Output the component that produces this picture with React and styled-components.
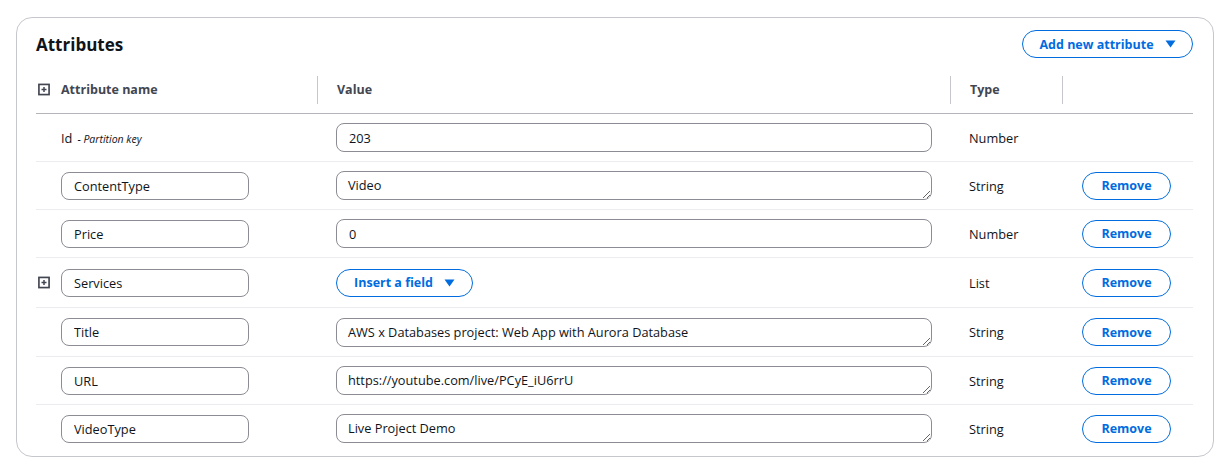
import React from "react";
import styled, { createGlobalStyle } from "styled-components";

const GlobalStyle = createGlobalStyle`
	body {
		margin: 0;
		background: #ffffff;
		font-family: "Open Sans", "Noto Sans", sans-serif;
		color: #0f141a;
	}
	* {
		box-sizing: border-box;
	}
`;

const Page = styled.div`
	padding: 17px 16px 0 16px;
`;

const Panel = styled.div`
	border: 1px solid #c6c6cd;
	border-radius: 16px;
	padding: 12px 20px 3px 19px;
	width: 1198px;
`;

const TopBar = styled.div`
	display: flex;
	justify-content: space-between;
	align-items: center;
	height: 28px;
`;

const Title = styled.h2`
	margin: 0;
	font-size: 17px;
	font-weight: 700;
	color: #0f141a;
`;

const PillButton = styled.button`
	display: inline-flex;
	align-items: center;
	justify-content: center;
	gap: 11px;
	height: ${(p) => p.h || 28}px;
	width: ${(p) => p.w}px;
	border: 1.5px solid #006ce0;
	border-radius: 20px;
	background: #ffffff;
	color: #006ce0;
	font-family: "Open Sans", "Noto Sans", sans-serif;
	font-size: 12.5px;
	font-weight: 700;
	padding: 0;
	cursor: pointer;
`;

const Grid = styled.div`
	display: grid;
	grid-template-columns: 281px 633px 112px 132px;
	align-items: center;
	height: ${(p) => p.h}px;
	border-bottom: 1px solid ${(p) => (p.header ? "#b4b4bb" : p.last ? "transparent" : "#ebebf0")};
`;

const HeaderRow = styled(Grid)`
	margin-top: 8px;
`;

const HeadCell = styled.div`
	display: flex;
	align-items: center;
	height: 28px;
	font-size: 12.5px;
	font-weight: 700;
	color: #424650;
	padding-left: ${(p) => p.pl || 19}px;
	border-left: ${(p) => (p.divider ? "1px solid #c6c6cd" : "none")};
	gap: 11px;
`;

const Cell = styled.div`
	display: flex;
	align-items: center;
	padding-left: ${(p) => p.pl || 19}px;
	font-size: 12.75px;
	color: #0f141a;
`;

const NameCell = styled(Cell)`
	padding-left: 2px;
	gap: 11px;
`;

const IconSlot = styled.span`
	width: 12px;
	height: 13px;
	display: inline-flex;
`;

const PlainName = styled.span`
	padding-left: 23px;
	font-size: 12.75px;
`;

const KeyNote = styled.span`
	font-size: 10.5px;
	font-style: italic;
	margin-left: 5px;
`;

const TextInput = styled.input`
	width: ${(p) => p.w}px;
	height: ${(p) => p.h || 29}px;
	border: 1px solid #8c8c94;
	border-radius: 8px;
	padding: 0 12px;
	font-family: "Open Sans", "Noto Sans", sans-serif;
	font-size: 12.75px;
	color: #0f141a;
	outline: none;
	background: #fff;
`;

const TextArea = styled.textarea`
	width: 596px;
	height: 29px;
	border: 1px solid #8c8c94;
	border-radius: 8px;
	padding: 4px 11px;
	font-family: "Open Sans", "Noto Sans", sans-serif;
	font-size: 12.75px;
	line-height: 19px;
	color: #0f141a;
	outline: none;
	resize: vertical;
	overflow: hidden;
	display: block;
`;

const ExpandIcon = () => (
	<svg width="13" height="13" viewBox="0 0 13 13">
		<rect x="1" y="1" width="11" height="11" fill="none" stroke="#424650" strokeWidth="1.8" />
		<path d="M6.5 3.8v5.4M3.8 6.5h5.4" stroke="#424650" strokeWidth="1.6" />
	</svg>
);

const Caret = () => (
	<svg width="11" height="8" viewBox="0 0 11 8">
		<path d="M0.5 0.5h10L5.5 7.5z" fill="#006ce0" />
	</svg>
);

const rows = [
	{ name: "ContentType", value: "Video", type: "String", area: true },
	{ name: "Price", value: "0", type: "Number" },
	{ name: "Services", type: "List", list: true },
	{ name: "Title", value: "AWS x Databases project: Web App with Aurora Database", type: "String", area: true },
	{ name: "URL", value: "https://youtube.com/live/PCyE_iU6rrU", type: "String", area: true },
	{ name: "VideoType", value: "Live Project Demo", type: "String", area: true },
];

const heights = [48, 48, 50, 49, 48, 48];

export default function App() {
	return (
		<Page>
			<GlobalStyle />
			<Panel>
				<TopBar>
					<Title>Attributes</Title>
					<PillButton w={171} h={28}>
						Add new attribute <Caret />
					</PillButton>
				</TopBar>

				<HeaderRow header h={48}>
					<HeadCell pl={2}>
						<IconSlot>
							<ExpandIcon />
						</IconSlot>
						Attribute name
					</HeadCell>
					<HeadCell divider>Value</HeadCell>
					<HeadCell divider>Type</HeadCell>
					<HeadCell divider />
				</HeaderRow>

				<Grid h={48}>
					<Cell pl={2}>
						<PlainName>
							Id
							<KeyNote>- Partition key</KeyNote>
						</PlainName>
					</Cell>
					<Cell>
						<TextInput w={596} defaultValue="203" />
					</Cell>
					<Cell>Number</Cell>
					<Cell />
				</Grid>

				{rows.map((r, i) => (
					<Grid key={r.name} h={heights[i]} last={i === rows.length - 1}>
						<NameCell>
							<IconSlot>{r.list && <ExpandIcon />}</IconSlot>
							<TextInput w={188} h={28} defaultValue={r.name} />
						</NameCell>
						<Cell>
							{r.list ? (
								<PillButton w={137} h={28}>
									Insert a field <Caret />
								</PillButton>
							) : r.area ? (
								<TextArea rows={1} defaultValue={r.value} />
							) : (
								<TextInput w={596} defaultValue={r.value} />
							)}
						</Cell>
						<Cell>{r.type}</Cell>
						<Cell pl={20}>
							<PillButton w={89} h={28}>
								Remove
							</PillButton>
						</Cell>
					</Grid>
				))}
			</Panel>
		</Page>
	);
}
